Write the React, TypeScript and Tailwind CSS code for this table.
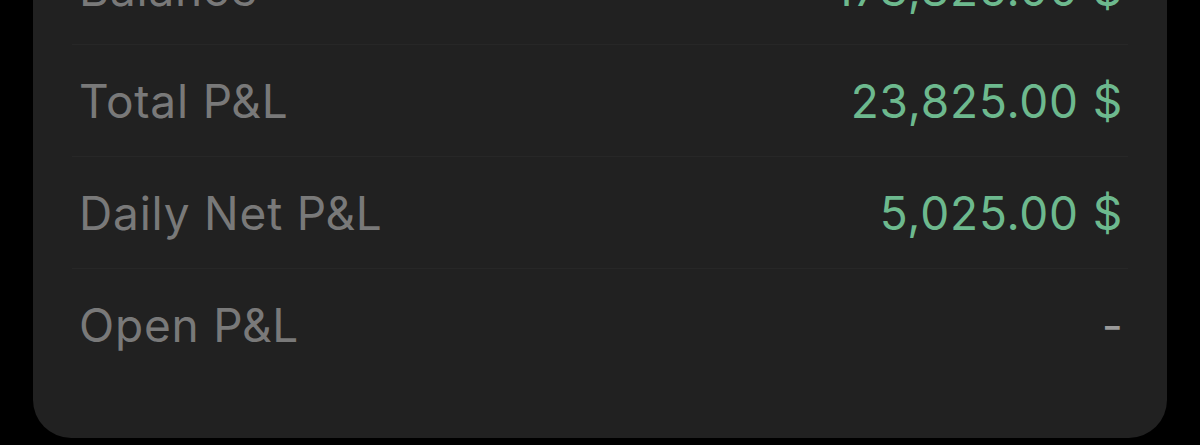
export default function App() {
  const rows = [
    { label: 'Balance', value: '173,825.00 $', tone: 'green' },
    { label: 'Total P&L', value: '23,825.00 $', tone: 'green' },
    { label: 'Daily Net P&L', value: '5,025.00 $', tone: 'green' },
    { label: 'Open P&L', value: '-', tone: 'muted' },
  ];

  return (
    <div className="h-[445px] w-[1200px] overflow-hidden bg-black" style={{ fontFamily: 'Inter, "Noto Sans", sans-serif' }}>
      <div className="mx-[33px] mt-[-67px] rounded-[38px] bg-[#212121] px-[39px] pb-[57px]">
        {rows.map((row, i) => (
          <div
            key={row.label}
            className={
              i < rows.length - 1
                ? 'flex h-[112px] items-center justify-between border-b border-[#272727] pl-[7px] pr-[5px]'
                : 'flex h-[112px] items-center justify-between pl-[7px] pr-[5px]'
            }
          >
            <span className="text-[46px] leading-none tracking-[0.8px] text-[#797979]">{row.label}</span>
            <span
              className={
                row.tone === 'green'
                  ? 'text-[46px] leading-none tracking-[0.8px] text-[#6db98e]'
                  : 'text-[46px] leading-none text-[#9a9a9a]'
              }
            >
              {row.value}
            </span>
          </div>
        ))}
      </div>
    </div>
  );
}
